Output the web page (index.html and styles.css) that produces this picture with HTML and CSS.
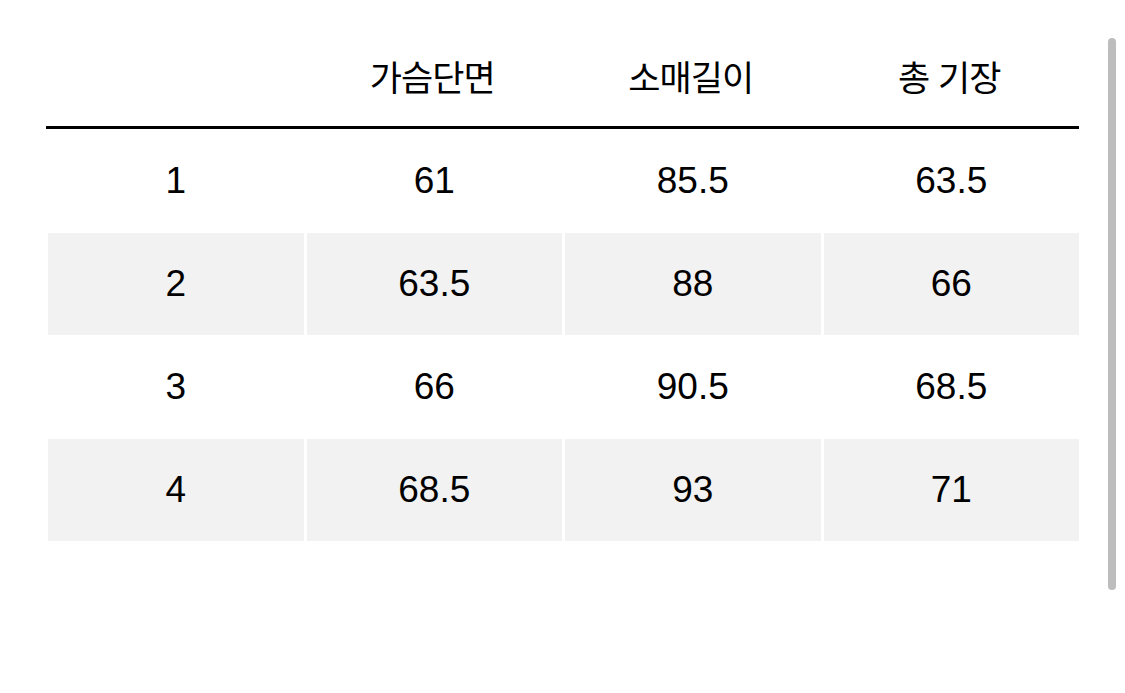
FILE: index.html
```html
<!DOCTYPE html>
<html lang="ko">
<head>
<meta charset="utf-8">
<link rel="stylesheet" href="styles.css">
</head>
<body>
<div class="page">
  <div class="sheet">
    <div class="head">
      <div class="hcell"></div>
      <div class="hcell">가슴단면</div>
      <div class="hcell">소매길이</div>
      <div class="hcell">총 기장</div>
    </div>
    <div class="body">
      <div class="cell">1</div><div class="cell">61</div><div class="cell">85.5</div><div class="cell">63.5</div>
      <div class="cell alt">2</div><div class="cell alt">63.5</div><div class="cell alt">88</div><div class="cell alt">66</div>
      <div class="cell">3</div><div class="cell">66</div><div class="cell">90.5</div><div class="cell">68.5</div>
      <div class="cell alt">4</div><div class="cell alt">68.5</div><div class="cell alt">93</div><div class="cell alt">71</div>
    </div>
  </div>
  <div class="scrollbar"></div>
</div>
</body>
</html>
```
FILE: styles.css
```css
html, body {
  margin: 0;
  padding: 0;
  background: #ffffff;
}
.page {
  position: relative;
  width: 1125px;
  height: 693px;
  padding: 0 0 0 46px;
  box-sizing: border-box;
}
.sheet {
  width: 1033px;
  color: #000;
  font-family: "Liberation Sans", "Noto Sans CJK KR", sans-serif;
}
.head {
  display: grid;
  grid-template-columns: repeat(4, 1fr);
  column-gap: 3px;
  padding: 26px 0 0 2px;
  height: 100px;
  border-bottom: 3px solid #000;
  align-items: center;
}
.hcell {
  text-align: center;
  font-family: "Noto Sans CJK KR", sans-serif;
  font-size: 35px;
  line-height: 40px;
  letter-spacing: -1px;
  padding-right: 4px;
  padding-bottom: 1px;
}
.body {
  display: grid;
  grid-template-columns: repeat(4, 1fr);
  grid-auto-rows: 102px;
  column-gap: 3px;
  row-gap: 1px;
  padding: 1px 0 0 2px;
}
.cell {
  display: flex;
  align-items: center;
  justify-content: center;
  font-size: 37px;
  padding-bottom: 1px;
}
.cell.alt {
  background: #f2f2f2;
}
.scrollbar {
  position: absolute;
  left: 1108px;
  top: 38px;
  width: 8px;
  height: 552px;
  border-radius: 4px;
  background: #bdbdbd;
}
```
